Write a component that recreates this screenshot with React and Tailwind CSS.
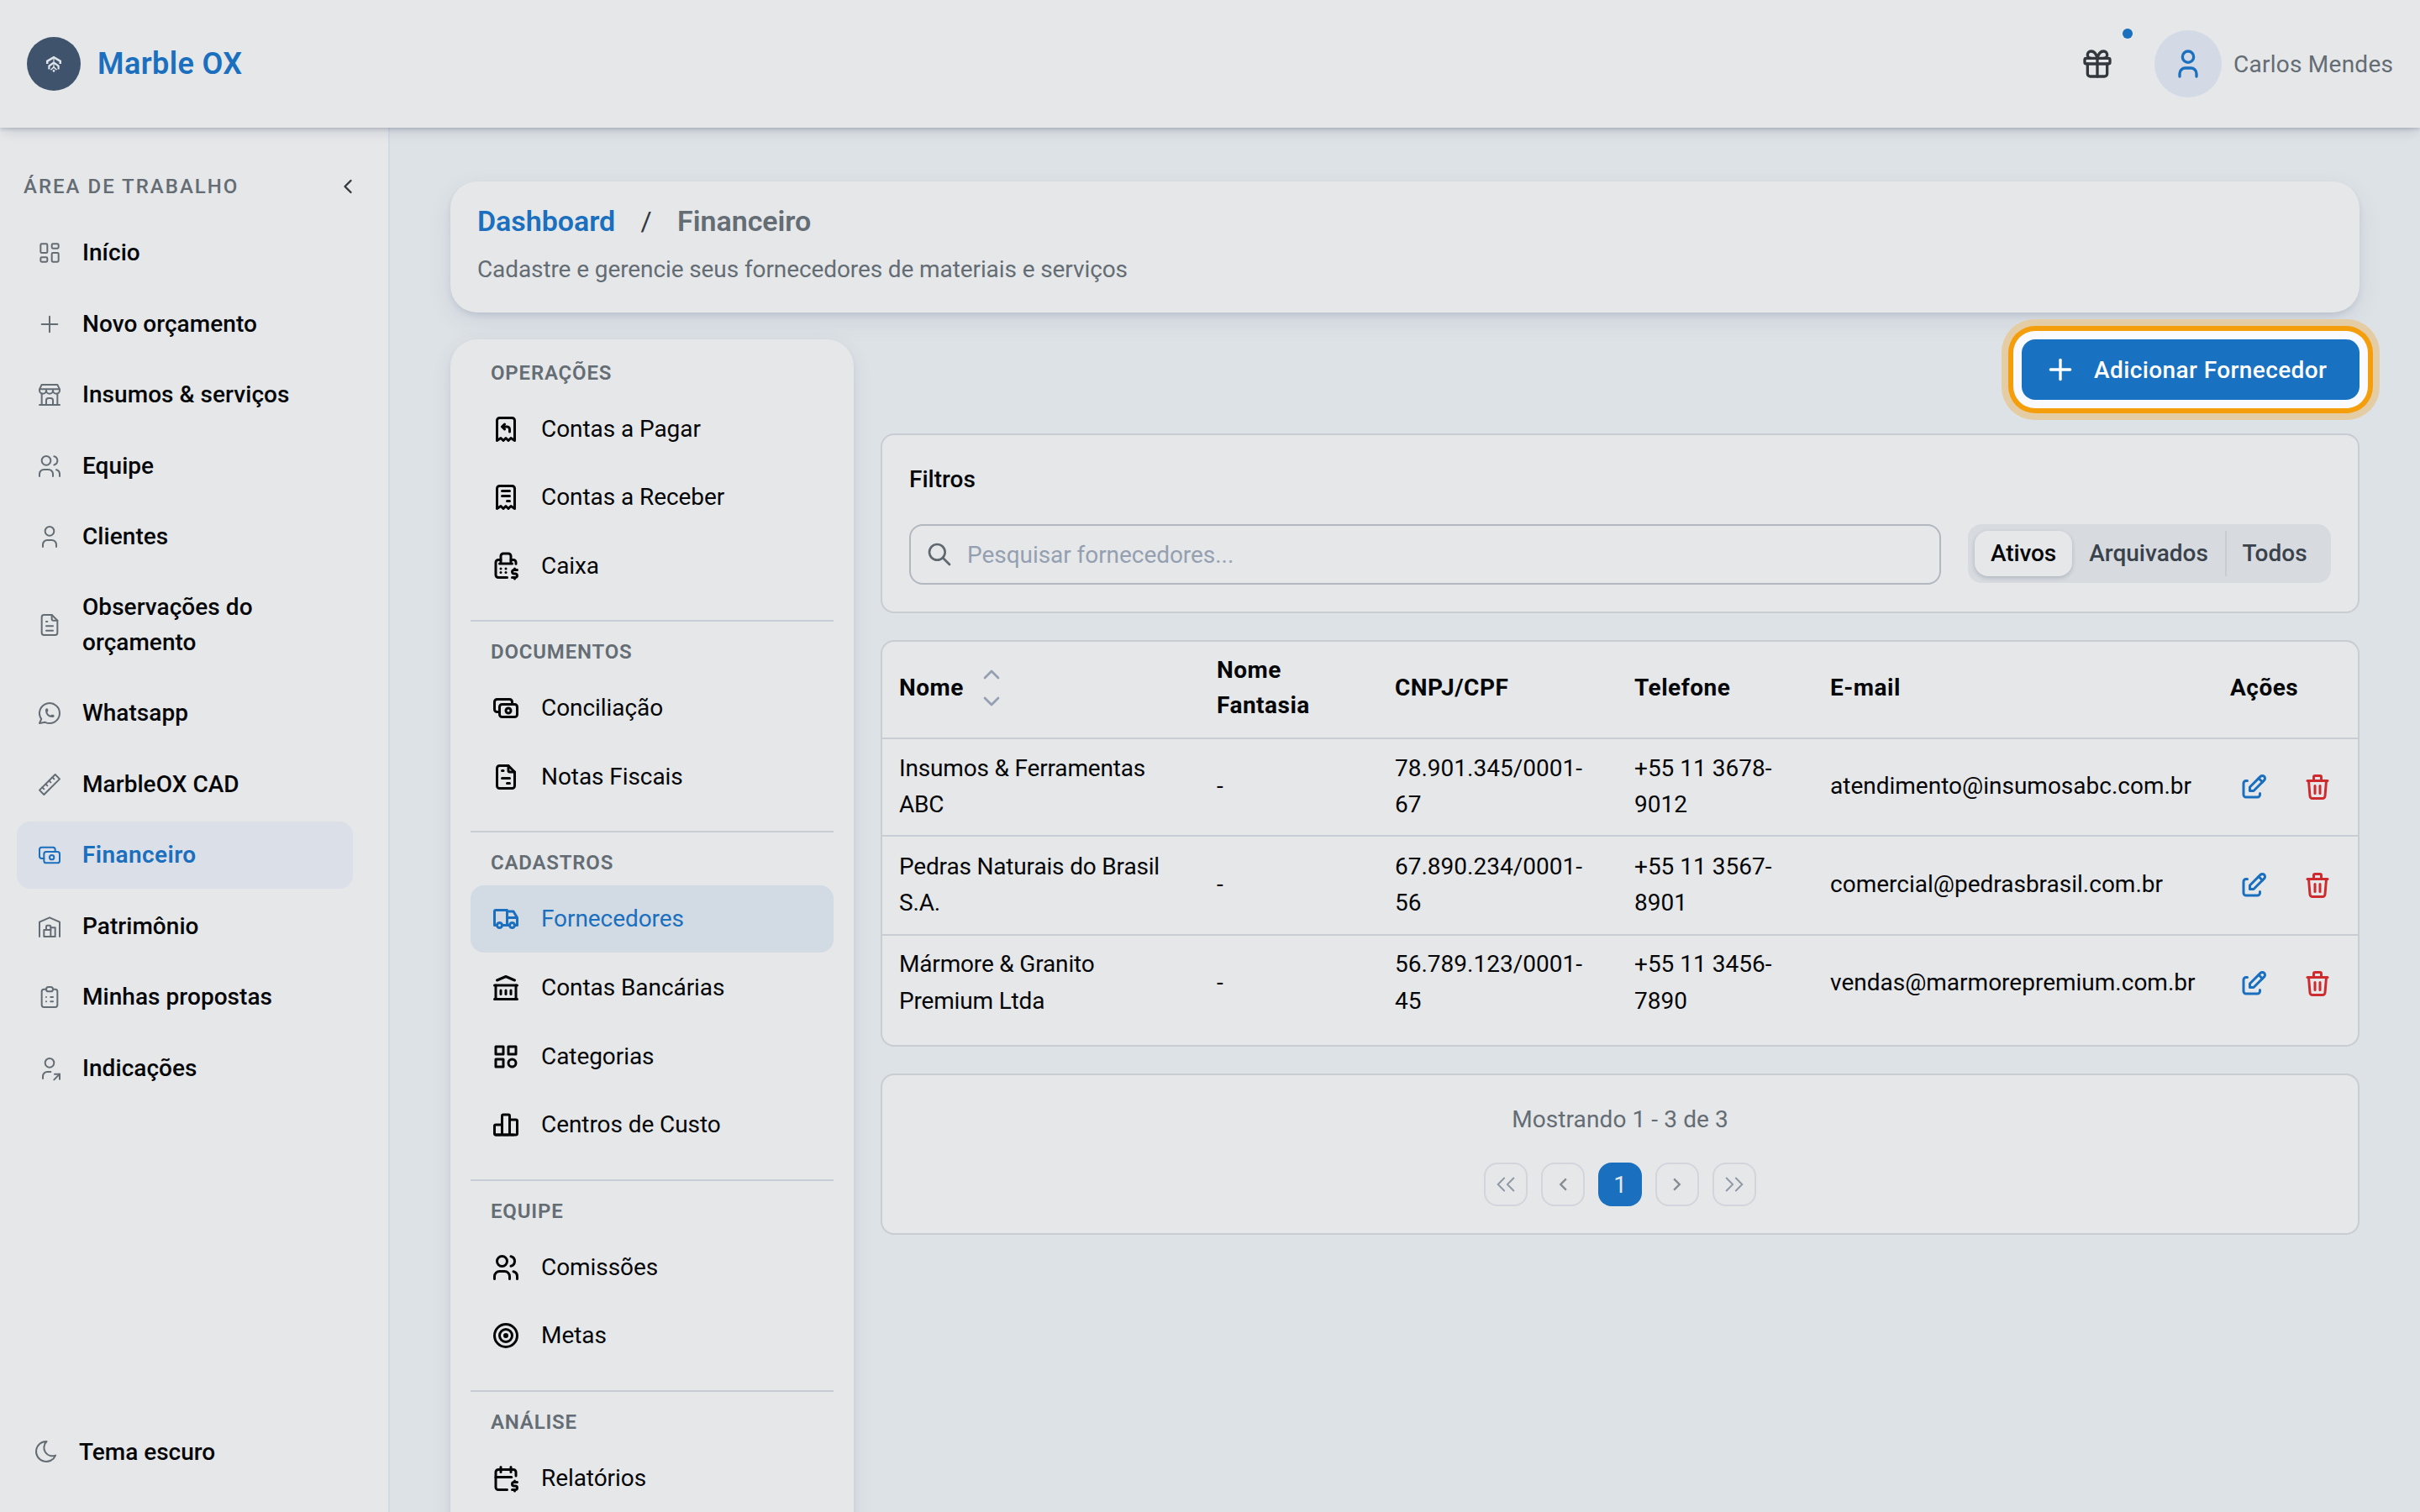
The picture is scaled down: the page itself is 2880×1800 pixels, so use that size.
import React from "react";
import {
  TbLayoutDashboard, TbPlus, TbBuildingStore, TbUsers, TbUser, TbFileText, TbBrandWhatsapp, TbRuler2, TbCash,
  TbBuildingWarehouse, TbClipboardList, TbUserShare, TbMoon, TbGift, TbReceiptRefund, TbReceipt, TbCashRegister,
  TbFileInvoice, TbTruck, TbBuildingBank, TbCategory, TbChartBar, TbTarget, TbCalendarDollar, TbEdit, TbTrash,
  TbSearch, TbChevronUp, TbChevronDown, TbChevronLeft,
} from "react-icons/tb";

const NAV = [
  { label: "Início", icon: TbLayoutDashboard },
  { label: "Novo orçamento", icon: TbPlus },
  { label: "Insumos & serviços", icon: TbBuildingStore },
  { label: "Equipe", icon: TbUsers },
  { label: "Clientes", icon: TbUser },
  { label: "Observações do\norçamento", icon: TbFileText },
  { label: "Whatsapp", icon: TbBrandWhatsapp },
  { label: "MarbleOX CAD", icon: TbRuler2 },
  { label: "Financeiro", icon: TbCash, active: true },
  { label: "Patrimônio", icon: TbBuildingWarehouse },
  { label: "Minhas propostas", icon: TbClipboardList },
  { label: "Indicações", icon: TbUserShare },
];

const GROUPS = [
  { title: "OPERAÇÕES", items: [["Contas a Pagar", TbReceiptRefund], ["Contas a Receber", TbReceipt], ["Caixa", TbCashRegister]] },
  { title: "DOCUMENTOS", items: [["Conciliação", TbCash], ["Notas Fiscais", TbFileInvoice]] },
  { title: "CADASTROS", items: [["Fornecedores", TbTruck, true], ["Contas Bancárias", TbBuildingBank], ["Categorias", TbCategory], ["Centros de Custo", TbChartBar]] },
  { title: "EQUIPE", items: [["Comissões", TbUsers], ["Metas", TbTarget]] },
  { title: "ANÁLISE", items: [["Relatórios", TbCalendarDollar]] },
];

const ROWS = [
  ["Insumos & Ferramentas\nABC", "-", "78.901.345/0001-\n67", "+55 11 3678-\n9012", "atendimento@insumosabc.com.br"],
  ["Pedras Naturais do Brasil\nS.A.", "-", "67.890.234/0001-\n56", "+55 11 3567-\n8901", "comercial@pedrasbrasil.com.br"],
  ["Mármore & Granito\nPremium Ltda", "-", "56.789.123/0001-\n45", "+55 11 3456-\n7890", "vendas@marmorepremium.com.br"],
];
const ROW_HEIGHTS = ["h-[116px]", "h-[118px]", "h-[113px]"];

const COLS = "grid grid-cols-[378px_212px_285px_233px_476px_172px] items-center";

function Logo() {
  return (
    <div className="flex size-16 items-center justify-center rounded-full bg-[#3f536d]">
      <svg width="18" height="22" viewBox="0 0 18 22" fill="none" stroke="#dfe4ea">
        <path d="M1.200 11V7.800L9 3.200l7.800 4.600V11" strokeWidth="2.600" />
        <path d="M9 9.500l-5.600 4v4M9 9.500l5.600 4v4" strokeWidth="2.200" />
        <path d="M9 3v13.500" strokeWidth="1.200" />
        <path d="M5.500 18.200L9 14.800l3.500 3.400" strokeWidth="1.600" />
        <circle cx="9" cy="19.400" r="1.300" fill="#dfe4ea" stroke="none" />
      </svg>
    </div>
  );
}

function Header() {
  return (
    <header className="relative z-10 flex h-[152px] shrink-0 items-center justify-between bg-[#e5e7e9] pr-8 pl-8 shadow-[0_2px_4px_rgba(20,30,60,0.16),0_8px_14px_-4px_rgba(20,30,60,0.14)]">
      <div className="flex items-center gap-5">
        <Logo />
        <span className="text-[36px] font-semibold tracking-[0.4px] text-[#1a6fbe]">Marble OX</span>
      </div>
      <div className="flex items-center">
        <div className="relative mr-12">
          <TbGift size={40} strokeWidth={2} className="text-[#33383e]" />
          <span className="absolute -top-[22px] left-[50px] size-3 rounded-full bg-[#1a6fbe]" />
        </div>
        <div className="flex size-20 items-center justify-center rounded-full bg-[#d3dae5]">
          <TbUser size={40} strokeWidth={2} className="text-[#1a6fbe]" />
        </div>
        <span className="ml-[14px] w-[190px] whitespace-nowrap pt-[2px] text-[28px] tracking-[0.25px] text-[#646c74]">Carlos Mendes</span>
      </div>
    </header>
  );
}

function Sidebar() {
  return (
    <aside className="flex w-[464px] shrink-0 flex-col border-r-2 border-[#d3dae6] bg-[#e5e7e9] pt-12">
      <div className="flex h-11 items-center justify-between pr-[34px] pl-7">
        <span className="text-[24px] font-medium tracking-[2px] text-[#646c74]">ÁREA DE TRABALHO</span>
        <TbChevronLeft size={28} strokeWidth={2} className="text-[#33383e]" />
      </div>
      <nav className="mt-[17px] flex flex-col gap-[4.5px] pr-[42px] pl-5">
        {NAV.map(({ label, icon: Icon, active }) => (
          <div
            key={label}
            className={
              "flex min-h-20 items-center gap-[23px] rounded-2xl py-[18.5px] pl-[23px] text-[28px] leading-[42px] " +
              (active ? "bg-[#dbdfe7] font-semibold tracking-[0.4px] text-[#1a6fbe]" : "font-medium tracking-[0.05px] text-[#050608]")
            }
          >
            <Icon size={32} strokeWidth={1.5} className={active ? "shrink-0 text-[#1a6fbe]" : "shrink-0 text-[#646c74]"} />
            <span className="whitespace-pre-line">{label}</span>
          </div>
        ))}
      </nav>
      <div className="mt-auto mb-8 flex h-20 items-center gap-[23px] pl-[39px]">
        <TbMoon size={32} strokeWidth={1.5} className="text-[#646c74]" />
        <span className="pt-[2px] text-[28px] font-medium text-[#050608]">Tema escuro</span>
      </div>
    </aside>
  );
}

function Breadcrumb() {
  return (
    <div className="h-[156px] shrink-0 rounded-[32px] bg-[#e5e7e9] px-8 pt-[22px] shadow-[0_4px_8px_-2px_rgba(30,40,80,0.14),0_10px_30px_-2px_rgba(60,70,130,0.1)]">
      <div className="flex h-[50px] items-center text-[34px] font-semibold tracking-[-0.05px]">
        <span className="text-[#1a6fbe]">Dashboard</span>
        <span className="mx-[30px] w-[14px] text-center text-[32px] font-normal text-[#33383e]">/</span>
        <span className="text-[#646c74]">Financeiro</span>
      </div>
      <p className="mt-[11px] text-[28px] leading-[43px] tracking-[-0.1px] text-[#646c74]">
        Cadastre e gerencie seus fornecedores de materiais e serviços
      </p>
    </div>
  );
}

function FinanceMenu() {
  return (
    <div className="h-[1500px] w-[480px] shrink-0 rounded-[32px] bg-[#e5e7e9] px-6 pt-[12.6px] shadow-[0_4px_8px_-2px_rgba(30,40,80,0.1),0_6px_26px_-2px_rgba(60,70,130,0.1)]">
      {GROUPS.map(({ title, items }, g) => (
        <section key={title} className={g ? "mt-[24.5px] border-t-2 border-[#c8cdd3] pt-[9px]" : ""}>
          <h3 className="flex h-[54px] items-center pl-6 text-[24px] font-semibold tracking-[0.8px] text-[#646c74]">{title}</h3>
          <div className="flex flex-col gap-[1.6px]">
            {items.map(([label, Icon, active]) => (
              <div
                key={label}
                className={
                  "flex h-20 items-center gap-6 rounded-2xl pl-6 text-[28px] tracking-[-0.07px] " +
                  (active ? "bg-[#d2dae4] text-[#1a6fbe]" : "text-[#050608]")
                }
              >
                <Icon size={36} strokeWidth={2} className="shrink-0" />
                <span>{label}</span>
              </div>
            ))}
          </div>
        </section>
      ))}
    </div>
  );
}

function Filters() {
  return (
    <div className="mt-10 h-[214px] shrink-0 rounded-2xl border-2 border-[#c8cdd3] bg-[#e5e7e9] px-8 pt-8">
      <div className="flex h-[42px] items-center text-[28px] font-medium text-[#050608]">Filtros</div>
      <div className="mt-8 flex items-start justify-between">
        <div className="flex h-[72px] w-[1228px] items-center gap-[17px] rounded-2xl border-2 border-[#b3b7c0] pl-[18px]">
          <TbSearch size={32} strokeWidth={2} className="text-[#5f676f]" />
          <span className="pt-[2px] text-[28px] tracking-[-0.05px] text-[#94a0b1]">Pesquisar fornecedores...</span>
        </div>
        <div className="flex h-[70px] w-[432px] items-center rounded-2xl bg-[#d7dbe0] px-2 text-[28px] font-medium text-[#3a424c]">
          <span className="flex h-[54px] w-[116px] items-center justify-center rounded-2xl bg-[#e5e7e9] tracking-[-0.15px] text-[#050608] shadow-[0_2px_5px_rgba(20,30,60,0.2)]">Ativos</span>
          <span className="flex h-[54px] w-[184px] items-center justify-center border-r-2 border-[#c8cdd3]">Arquivados</span>
          <span className="flex h-[54px] w-[114px] items-center justify-center">Todos</span>
        </div>
      </div>
    </div>
  );
}

function SupplierTable() {
  return (
    <div className="mt-8 h-[484px] shrink-0 rounded-2xl border-2 border-[#c8cdd3] bg-[#e5e7e9] text-[28px] text-[#050608]">
      <div className={COLS + " h-[116px] border-b-2 border-[#c8cdd3] pb-1 font-bold leading-[42px] tracking-[0.5px]"}>
        <div className="flex items-center gap-[17px] pl-5">
          Nome
          <span className="flex flex-col text-[#94a0b1]">
            <TbChevronUp size={32} strokeWidth={2} />
            <TbChevronDown size={32} strokeWidth={2} />
          </span>
        </div>
        <div className="whitespace-pre-line pl-5">{"Nome\nFantasia"}</div>
        <div className="pl-5">CNPJ/CPF</div>
        <div className="pl-5">Telefone</div>
        <div className="pl-5">E-mail</div>
        <div className="pl-5">Ações</div>
      </div>
      {ROWS.map((cells, r) => (
        <div key={cells[0]} className={COLS + " leading-[43.4px] " + ROW_HEIGHTS[r] + (r < 2 ? " border-b-2 border-[#c8cdd3]" : "")}>
          {cells.map((text, i) => (
            <div key={i} className={"whitespace-pre-line pb-[2px] pl-5" + (i === 0 ? " tracking-[-0.17px]" : "")}>{text}</div>
          ))}
          <div className="flex items-center gap-10 pl-[30px]">
            <TbEdit size={36} strokeWidth={2} className="text-[#1a6fbe]" />
            <TbTrash size={36} strokeWidth={2} className="text-[#cf2b2e]" />
          </div>
        </div>
      ))}
    </div>
  );
}

function DoubleChevron({ flip }) {
  return (
    <svg width="28" height="28" viewBox="0 0 15 15" fill="none" stroke="#8e98a4" strokeLinecap="round" className={flip ? "rotate-180" : ""}>
      <path d="M6.500 3.500l-4 4 4 4M12.500 3.500l-4 4 4 4" />
    </svg>
  );
}

function Chevron({ flip }) {
  return (
    <svg width="28" height="28" viewBox="0 0 16 16" fill="#868b92" className={flip ? "rotate-180" : ""}>
      <path d="M7.381 8l3.300 3.300-.943.943L5.495 8l4.243-4.243.943.943L7.381 8z" />
    </svg>
  );
}

function PageButton({ children }) {
  return <div className="flex size-[52px] items-center justify-center rounded-2xl border-2 border-[#d2d5dc]">{children}</div>;
}

function Pagination() {
  return (
    <div className="mt-8 flex h-48 shrink-0 flex-col items-center rounded-2xl border-2 border-[#c8cdd3] bg-[#e5e7e9] pt-[31px]">
      <div className="h-[43px] text-[28px] leading-[43px] tracking-[0.1px] text-[#646c74]">Mostrando 1 - 3 de 3</div>
      <div className="mt-[30px] flex gap-4">
        <PageButton><DoubleChevron /></PageButton>
        <PageButton><Chevron /></PageButton>
        <div className="flex size-[52px] items-center justify-center rounded-2xl bg-[#1a6fbe] pt-[2px] text-[28px] text-[#e5e7e9]">1</div>
        <PageButton><Chevron flip /></PageButton>
        <PageButton><DoubleChevron flip /></PageButton>
      </div>
    </div>
  );
}

export default function App() {
  return (
    <div className="flex h-[1800px] w-[2880px] flex-col overflow-hidden bg-[#dde2e6] font-[Roboto,sans-serif] leading-none">
      <Header />
      <div className="flex h-[1648px] min-h-0">
        <Sidebar />
        <main className="flex flex-1 flex-col overflow-hidden pt-16 pr-[72px] pl-[72px]">
          <Breadcrumb />
          <div className="mt-8 flex gap-8">
            <FinanceMenu />
            <div className="flex flex-1 flex-col">
              <button className="flex h-[72px] w-[402px] shrink-0 items-center gap-5 self-end rounded-2xl bg-[#1971c2] pl-[26px] text-[28px] font-medium whitespace-nowrap text-white shadow-[0_0_0_10px_#f8faff,0_0_0_16px_#f59e0b,0_0_0_24px_#e4cda5]">
                <TbPlus size={40} strokeWidth={2} />
                <span className="pt-[2px] tracking-[0.4px]">Adicionar Fornecedor</span>
              </button>
              <Filters />
              <SupplierTable />
              <Pagination />
            </div>
          </div>
        </main>
      </div>
    </div>
  );
}
